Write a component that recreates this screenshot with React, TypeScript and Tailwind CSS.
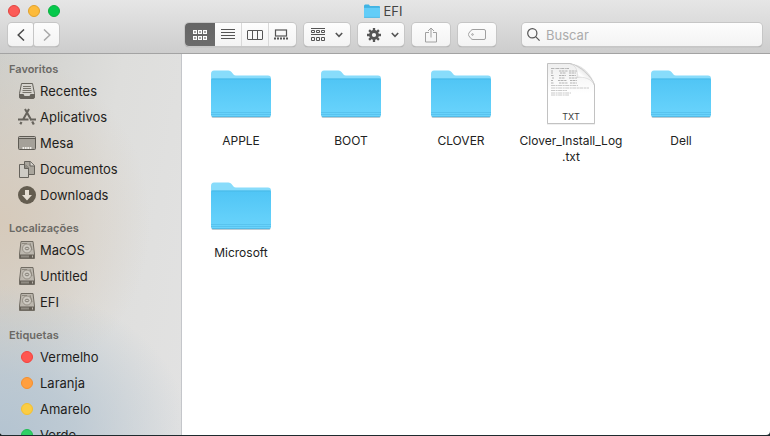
import React, { useState } from 'react';

interface SidebarItem {
  label: string;
  icon: React.ReactNode;
}

interface SidebarSection {
  title: string;
  items: SidebarItem[];
}

interface FileEntry {
  name: string;
  extension?: string;
  kind: 'folder' | 'text';
}

const files: FileEntry[] = [
  { name: 'APPLE', kind: 'folder' },
  { name: 'BOOT', kind: 'folder' },
  { name: 'CLOVER', kind: 'folder' },
  { name: 'Clover_Install_Log', extension: '.txt', kind: 'text' },
  { name: 'Dell', kind: 'folder' },
  { name: 'Microsoft', kind: 'folder' },
];

function FolderIcon({ id, className }: { id: string; className: string }) {
  return (
    <svg viewBox="0 0 64 64" className={className} aria-hidden="true">
      <defs>
        <linearGradient id={id} x1="0" y1="0" x2="0" y2="1">
          <stop offset="0" stopColor="#50c5f5" />
          <stop offset="1" stopColor="#6ad4fc" />
        </linearGradient>
      </defs>
      <rect x="2.5" y="52" width="59" height="4" rx="1.5" fill="#000" opacity="0.18" />
      <path d="M2 12q0-3.500 3-3.500h14.500q2 0 3 1.500l2 2.500q.8 1 2.500 1H59q3 0 3 3v10H2z" fill="#88dcfb" />
      <path d="M2 18q0-1.500 1.500-1.500h57Q62 16.500 62 18v34.500q0 2.500-2.500 2.500h-55Q2 55 2 52.500z" fill={`url(#${id})`} />
      <path d="M2.500 17h59" stroke="#46b5e2" strokeWidth="0.700" />
      <path d="M2 50.500h60M2 52.500h60" stroke="#4fb9e6" strokeWidth="0.600" />
      <path d="M3 54.700h58" stroke="#4aaeda" strokeWidth="0.800" />
    </svg>
  );
}

// Small folder for the window title, filling its whole box
const TitleFolderIcon = () => (
  <svg viewBox="0 0 16 14" className="w-4 h-3.5" aria-hidden="true">
    <path d="M0 2Q0 .5 1.200.5h3.600l1.200 1.500h9q1 0 1 1V5H0z" fill="#3fb4e4" />
    <path d="M0 3.500h16V13q0 .8-1 .8H1Q0 13.800 0 13z" fill="#62cdf8" />
    <path d="M0 3.500h16M0 13.400h16" stroke="#43b0df" strokeWidth="0.700" />
  </svg>
);

function TextFileIcon() {
  return (
    <svg viewBox="0 0 64 64" className="w-16 h-16" aria-hidden="true">
      <defs>
        <linearGradient id="curl" x1="0.200" y1="0.800" x2="0.800" y2="0.200">
          <stop offset="0" stopColor="#cfcfcf" />
          <stop offset="0.400" stopColor="#ffffff" />
          <stop offset="1" stopColor="#d2d2d2" />
        </linearGradient>
        <linearGradient id="paper" x1="0" y1="0" x2="0" y2="1">
          <stop offset="0" stopColor="#efefef" />
          <stop offset="0.500" stopColor="#ffffff" />
        </linearGradient>
      </defs>
      <path d="M8 2h26C46 4 53 14 56 23v39.500H8z" fill="#000" opacity="0.120" />
      <path d="M8.500 1.500H31C41 4 52 14 55.500 23v38.500h-47z" fill="url(#paper)" stroke="#bcbcbc" strokeWidth="0.900" />
      <g stroke="#a2a2a2" strokeWidth="0.800" fill="none">
        <path d="M12 6.500h18" strokeDasharray="3 .6 1 .5" />
        <path d="M12 9h2M20 9h9M30 9h8M12 11h2M21 11h6M30 11h7M12 13.500h3M20 13.500h7M30 13.500h7M13 16h2M20 16h6M30 16h8M12 18.500h2M19 18.500h9M31 18.500h7M12 21h3M20 21h9M31 21h7" strokeDasharray="2 .5 3 .7" />
        <path d="M12 23.500h27M12 26h38M12 28.500h16M12 31h20M12 33h18" stroke="#bcbcbc" strokeDasharray="4 .6 2 .5" />
      </g>
      <path d="M31 1.500c7 3 8 8 7 14 7-1 14 1 17.500 7.500C52 14 41 4 31 1.500z" fill="url(#curl)" stroke="#c8c8c8" strokeWidth="0.500" />
      <text x="32" y="58" textAnchor="middle" fontFamily="Inter, sans-serif" fontSize="9" fill="#3c3c3c">TXT</text>
    </svg>
  );
}

const RecentsIcon = () => (
  <svg viewBox="0 0 18 18" className="w-[18px] h-[18px]" aria-hidden="true">
    <path d="M3.500 1.500h11l2 10V15q0 1.500-1.500 1.500H3Q1.500 16.500 1.500 15v-3.500z" fill="#d5d3ce" stroke="#66635c" />
    <path d="M5 4.500h8M5 6.500h8M4.500 8.500h9M4.500 10.500h9" stroke="#77746c" />
    <path d="M1.500 12h4l1 2h5l1-2h4v3q0 1.500-1.500 1.500H3Q1.500 16.500 1.500 15z" fill="#66635c" />
  </svg>
);

const AppsIcon = () => (
  <svg viewBox="0 0 18 18" className="w-[18px] h-[18px]" fill="none" stroke="#66635c" strokeWidth="2" aria-hidden="true">
    <path d="M7 1l6.500 11.500M11 1L4.800 12M0 11.500h10.500M13 11.500h5" />
    <path d="M14.200 13.500l1.600 3M3.500 14l-1.200 2.200" strokeWidth="2.200" />
  </svg>
);

const DesktopIcon = () => (
  <svg viewBox="0 0 18 18" className="w-[18px] h-[18px]" aria-hidden="true">
    <rect x="0.500" y="2.500" width="17" height="13" rx="1" fill="#a5a199" stroke="#5e5b54" />
    <path d="M1 4.500h16" stroke="#5e5b54" />
    <path d="M1 3.500h16" stroke="#bdb9b2" />
    <path d="M4.500 14h9" stroke="#efede8" strokeWidth="2" strokeDasharray="1.700 .7" />
  </svg>
);

const DocumentsIcon = () => (
  <svg viewBox="0 0 18 18" className="w-[18px] h-[18px]" strokeLinejoin="round" aria-hidden="true">
    <path d="M6.500 1.500h6l4 4v9h-10z" fill="#aaa69d" stroke="#66635c" />
    <path d="M12 1.500V6h4.500" fill="#d9d6d0" stroke="#66635c" />
    <path d="M1.500 4.500H7L10.500 8v9.500h-9z" fill="#cfccc5" stroke="#66635c" />
    <path d="M6.500 4.500v4h4" fill="#8d8980" stroke="#66635c" />
  </svg>
);

const DownloadsIcon = () => (
  <svg viewBox="0 0 18 18" className="w-[18px] h-[18px]" aria-hidden="true">
    <circle cx="9" cy="9" r="9" fill="#645d50" />
    <path d="M7 4h4v5h3l-5 5.500L4 9h3z" fill="#e4ddd3" />
  </svg>
);

const DiskIcon = () => (
  <svg viewBox="0 0 18 18" className="w-[18px] h-[18px]" fill="none" aria-hidden="true">
    <path d="M3 .5h12l1.500 12.500v4.500h-15V13z" fill="#bcb7ae" stroke="#716c63" strokeLinejoin="round" />
    <circle cx="9" cy="7.500" r="4.500" fill="#cdc9c1" stroke="#898379" strokeWidth="0.800" />
    <ellipse cx="9" cy="7.500" rx="1.800" ry="1.300" stroke="#716c63" strokeWidth="0.800" />
    <path d="M4 2.500h5M12 2l2 7" stroke="#898379" strokeWidth="0.900" />
    <path d="M2 13.500h14v3.500H2z" fill="#655f56" />
    <path d="M3.500 15.500h8M14 15.500h1" stroke="#bdb8ae" strokeWidth="2" strokeDasharray="1 1" />
  </svg>
);

const TagRed = <span className="w-3 h-3 rounded-full bg-[#ff5650] border border-[#f4423d]" />;
const TagOrange = <span className="w-3 h-3 rounded-full bg-[#ff9f40] border border-[#f58f2c]" />;
const TagYellow = <span className="w-3 h-3 rounded-full bg-[#fbcd44] border border-[#f5c02e]" />;
const TagGreen = <span className="w-3 h-3 rounded-full bg-[#30d065] border border-[#1fbe54]" />;

const sections: SidebarSection[] = [
  {
    title: 'Favoritos',
    items: [
      { label: 'Recentes', icon: <RecentsIcon /> },
      { label: 'Aplicativos', icon: <AppsIcon /> },
      { label: 'Mesa', icon: <DesktopIcon /> },
      { label: 'Documentos', icon: <DocumentsIcon /> },
      { label: 'Downloads', icon: <DownloadsIcon /> },
    ],
  },
  {
    title: 'Localizações',
    items: [
      { label: 'MacOS', icon: <DiskIcon /> },
      { label: 'Untitled', icon: <DiskIcon /> },
      { label: 'EFI', icon: <DiskIcon /> },
    ],
  },
  {
    title: 'Etiquetas',
    items: [
      { label: 'Vermelho', icon: TagRed },
      { label: 'Laranja', icon: TagOrange },
      { label: 'Amarelo', icon: TagYellow },
      { label: 'Verde', icon: TagGreen },
    ],
  },
];

const Caret = () => (
  <svg viewBox="0 0 8 6" className="w-2 h-1.5" fill="none" stroke="#555" strokeWidth="1.600" aria-hidden="true">
    <path d="M.8 1L4 4.300 7.200 1" />
  </svg>
);

const SixSquares = () => (
  <svg viewBox="0 0 14 10" className="w-3.5 h-2.5" fill="none" stroke="currentColor" strokeWidth="1.200" aria-hidden="true">
    <path d="M.6.6h2.800v2.800H.6zM5.600.6h2.800v2.800H5.600zM10.600.6h2.800v2.800h-2.800zM.6 6.600h2.800v2.800H.6zM5.600 6.600h2.800v2.800H5.600zM10.600 6.600h2.800v2.800h-2.800z" />
  </svg>
);

function Toolbar() {
  const [query, setQuery] = useState('');

  const button = 'h-[23px] flex items-center justify-center bg-linear-to-b from-[#fdfdfd] to-[#f3f3f3] shadow-[0_0_0_1px_#c6c6c6,0_1px_1px_#8c8c8c]';

  return (
    <div className="flex items-center px-2 h-[29px] text-[#555]">
      <div className="flex gap-px">
        <button className={`${button} w-[25px] rounded-l-sm rounded-r-xs`} aria-label="Voltar">
          <svg viewBox="0 0 8 12" className="w-2 h-3" fill="none" stroke="#4a4a4a" strokeWidth="1.500">
            <path d="M7 .5L1.200 6 7 11.500" />
          </svg>
        </button>
        <button className={`${button} w-[25px] rounded-r-sm rounded-l-xs`} aria-label="Avançar">
          <svg viewBox="0 0 8 12" className="w-2 h-3" fill="none" stroke="#a9a9a9" strokeWidth="1.500">
            <path d="M1 .5L6.800 6 1 11.500" />
          </svg>
        </button>
      </div>

      <div className={`${button} ml-[126px] rounded overflow-hidden`}>
        <button className="w-[30px] h-full flex items-center justify-center bg-linear-to-b from-[#656565] to-[#6c6c6c] text-white" aria-label="Ícones">
          <SixSquares />
        </button>
        <button className="w-[27px] h-full flex items-center justify-center border-r border-[#d9d9d9]" aria-label="Lista">
          <svg viewBox="0 0 14 11" className="w-3.5 h-[11px]" stroke="currentColor">
            <path d="M0 .5h14M0 3.500h14M0 6.500h14M0 9.500h14" />
          </svg>
        </button>
        <button className="w-[27px] h-full flex items-center justify-center border-r border-[#d9d9d9]" aria-label="Colunas">
          <svg viewBox="0 0 16 10" className="w-4 h-2.5" fill="none" stroke="currentColor">
            <rect x="0.500" y="0.500" width="15" height="9" rx="0.500" />
            <path d="M5.500 0v10M10.500 0v10" />
          </svg>
        </button>
        <button className="w-[27px] h-full flex items-center justify-center pr-1" aria-label="Galeria">
          <svg viewBox="0 0 14 11" className="w-3.5 h-[11px]" fill="none" stroke="currentColor">
            <rect x="1.500" y="1" width="11" height="6" strokeWidth="1.200" />
            <path d="M0 9.500h14" strokeWidth="2" strokeDasharray="2 1" />
          </svg>
        </button>
      </div>

      <button className={`${button} ml-2 w-[46px] gap-2.5 rounded`} aria-label="Agrupar">
        <svg viewBox="0 0 14 13" className="w-3.5 h-[13px]" fill="none" stroke="currentColor">
          <path d="M0 .5h14M0 6.500h14" />
          <path d="M.5 2.500h3v2h-3zM5.500 2.500h3v2h-3zM10.500 2.500h3v2h-3zM.5 9.500h3v3h-3zM5.500 9.500h3v3h-3zM10.500 9.500h3v3h-3z" />
        </svg>
        <Caret />
      </button>

      <button className={`${button} ml-2 w-[46px] gap-2.5 pl-1 rounded`} aria-label="Ações">
        <svg viewBox="0 0 14 14" className="w-3.5 h-3.5" fill="none" stroke="currentColor">
          <circle cx="7" cy="7" r="3.500" strokeWidth="2.800" />
          <path d="M7 0v3M7 11v3M0 7h3M11 7h3M2.100 2.100l2 2M9.900 9.900l2 2M2.100 11.900l2-2M9.900 4.100l2-2" strokeWidth="2.300" />
        </svg>
        <Caret />
      </button>

      <button className={`${button} ml-2 w-[38px] rounded`} aria-label="Compartilhar">
        <svg viewBox="0 0 12 16" className="w-3 h-4" fill="none" stroke="#a0a0a0">
          <path d="M4 5.500H.5v9.500h11V5.500H8M6 10.500V1M3 4l3-3 3 3" />
        </svg>
      </button>

      <button className={`${button} ml-2 w-[38px] rounded`} aria-label="Etiquetas">
        <svg viewBox="0 0 18 11" className="w-[18px] h-[11px]" fill="none" stroke="#a0a0a0">
          <path d="M5 .5h11q1.500 0 1.500 1.500v7q0 1.500-1.500 1.500H5Q3.800 10.500 3 9.600L.8 6.800Q0 5.500.8 4.200L3 1.400Q3.800.5 5 .5z" />
          <circle cx="4.500" cy="5.500" r="0.800" />
        </svg>
      </button>

      <label className={`${button} ml-[26px] flex-1 min-w-0 gap-1.5 pl-[5px] rounded`}>
        <svg viewBox="0 0 13 13" className="w-[13px] h-[13px] shrink-0" fill="none" stroke="#555" strokeWidth="1.200">
          <circle cx="5.300" cy="5.300" r="4.600" />
          <path d="M8.600 8.600l4 4" />
        </svg>
        <input
          type="search"
          value={query}
          onChange={(e) => setQuery(e.target.value)}
          placeholder="Buscar"
          aria-label="Buscar"
          className="flex-1 min-w-0 pt-0.5 bg-transparent text-[13px] text-[#333] placeholder:text-[#ababab] outline-none"
        />
      </label>
    </div>
  );
}

function Sidebar() {
  return (
    <nav className="w-[182px] shrink-0 overflow-hidden border-r border-[#c4c6ca] pt-1.5 bg-[radial-gradient(ellipse_190px_150px_at_0%_100%,#b4c4d1_0%,#b4c4d1c0_40%,#b4c4d100_100%),radial-gradient(ellipse_150px_170px_at_0%_44%,#d6cabb_0%,#d6cabb90_45%,#d6cabb00_100%),linear-gradient(100deg,#cfcfcb_0%,#dededc_50%,#e2e2e2_100%)]">
      {sections.map((section) => (
        <section key={section.title} className="mb-[11px]">
          <h2 className="px-[9px] text-[11px] leading-[18px] font-semibold text-[#6b6965]">{section.title}</h2>
          <ul>
            {section.items.map((item) => (
              <li key={item.label}>
                <a href="#" className="flex items-center h-[26px] pl-[18px] gap-1 text-[13px] text-[#1f1e1c]">
                  <span className="w-[18px] flex justify-center">{item.icon}</span>
                  <span className="pt-0.5">{item.label}</span>
                </a>
              </li>
            ))}
          </ul>
        </section>
      ))}
    </nav>
  );
}

export default function App() {
  return (
    <div className="h-screen bg-[#1f2a2e] pb-px font-['Inter',sans-serif] cursor-default">
      <div className="h-full flex flex-col overflow-hidden rounded-b-sm bg-white">
        <header className="shrink-0 border-b border-[#a3a3a3] bg-linear-to-b from-[#e6e6e6] to-[#cdcdcd] pb-1">
          <div className="grid grid-cols-[1fr_auto_1fr] items-center h-5 px-2">
            <div className="flex gap-2">
              <button className="w-3 h-3 rounded-full bg-[#fc5b57] border border-[#e2443f]" aria-label="Fechar" />
              <button className="w-3 h-3 rounded-full bg-[#fdbb3b] border border-[#e1a12b]" aria-label="Minimizar" />
              <button className="w-3 h-3 rounded-full bg-[#05c94b] border border-[#0bb040]" aria-label="Zoom" />
            </div>
            <h1 className="flex items-center gap-1 pr-1 text-[13px] text-[#444]">
              <TitleFolderIcon />
              <span className="pt-0.5">EFI</span>
            </h1>
          </div>
          <Toolbar />
        </header>

        <div className="flex flex-1 min-h-0">
          <Sidebar />
          <main className="flex-1 overflow-hidden pl-1 pt-2">
            <ul className="grid grid-cols-[repeat(auto-fill,110px)] auto-rows-[112px]">
              {files.map((file) => (
                <li key={file.name} className="flex flex-col items-center">
                  {file.kind === 'folder' ? (
                    <FolderIcon id={`folder-${file.name}`} className="w-16 h-16" />
                  ) : (
                    <TextFileIcon />
                  )}
                  <span className="mt-[7px] w-[108px] text-center text-xs leading-4 text-[#222]">
                    {file.name}
                    {file.extension && <><wbr />{file.extension}</>}
                  </span>
                </li>
              ))}
            </ul>
          </main>
        </div>
      </div>
    </div>
  );
}
